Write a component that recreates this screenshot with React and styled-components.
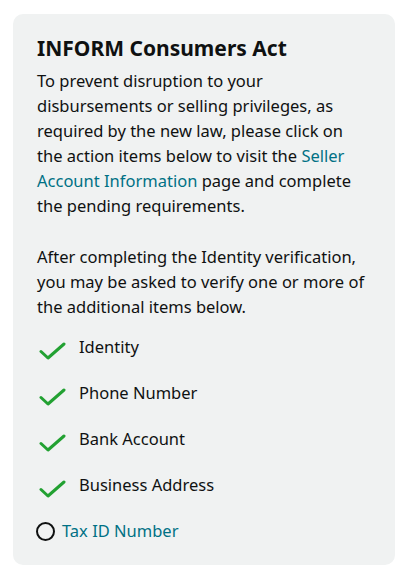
import React from "react";
import styled, { createGlobalStyle } from "styled-components";

const GlobalStyle = createGlobalStyle`
  body {
    margin: 0;
    background: #ffffff;
    font-family: "Noto Sans", "Open Sans", Arial, sans-serif;
    color: #0f1111;
  }
`;

const Page = styled.div`
  padding: 14px 17px 6px 13px;
`;

const Card = styled.div`
  background-color: #f0f2f2;
  border-radius: 10px;
  padding: 20px 25px 22px 24px;
`;

const Title = styled.h2`
  margin: 0 0 6px 0;
  font-size: 21px;
  line-height: 28px;
  font-weight: 700;
`;

const Paragraph = styled.p`
  margin: 0 0 26px 0;
  font-size: 16.5px;
  line-height: 25px;
`;

const Link = styled.a`
  color: #007185;
  text-decoration: none;
`;

const List = styled.ul`
  list-style: none;
  margin: -11px 0 0 0;
  padding: 0;
  display: flex;
  flex-direction: column;
  gap: 21px;
`;

const Item = styled.li`
  display: flex;
  align-items: flex-start;
  font-size: 16.5px;
  line-height: 25px;
`;

const CheckBox = styled.span`
  width: 28px;
  height: 17px;
  margin: 8px 12px 0 2px;
  display: flex;
`;

const Circle = styled.span`
  width: 15px;
  height: 15px;
  border: 2.75px solid #0f1111;
  border-radius: 50%;
  margin: 4px 7px 0 -1px;
  flex-shrink: 0;
`;

const Check = () => (
  <CheckBox>
    <svg width="27" height="18" viewBox="0 0 27 18" fill="none">
      <path d="M2 9.5 L9 16 L25 2" stroke="#22a132" strokeWidth="3" strokeLinecap="round" strokeLinejoin="round" />
    </svg>
  </CheckBox>
);

const done = ["Identity", "Phone Number", "Bank Account", "Business Address"];

export default function App() {
  return (
    <>
      <GlobalStyle />
      <Page>
        <Card>
          <Title>INFORM Consumers Act</Title>
          <Paragraph>
            To prevent disruption to your disbursements or selling privileges, as required by the new
            law, please click on the action items below to visit the{" "}
            <Link href="#">Seller Account Information</Link> page and complete the pending
            requirements.
          </Paragraph>
          <Paragraph>
            After completing the Identity verification, you may be asked to verify one or more of the
            additional items below.
          </Paragraph>
          <List>
            {done.map((label) => (
              <Item key={label}>
                <Check />
                <span>{label}</span>
              </Item>
            ))}
            <Item>
              <Circle />
              <Link href="#">Tax ID Number</Link>
            </Item>
          </List>
        </Card>
      </Page>
    </>
  );
}
